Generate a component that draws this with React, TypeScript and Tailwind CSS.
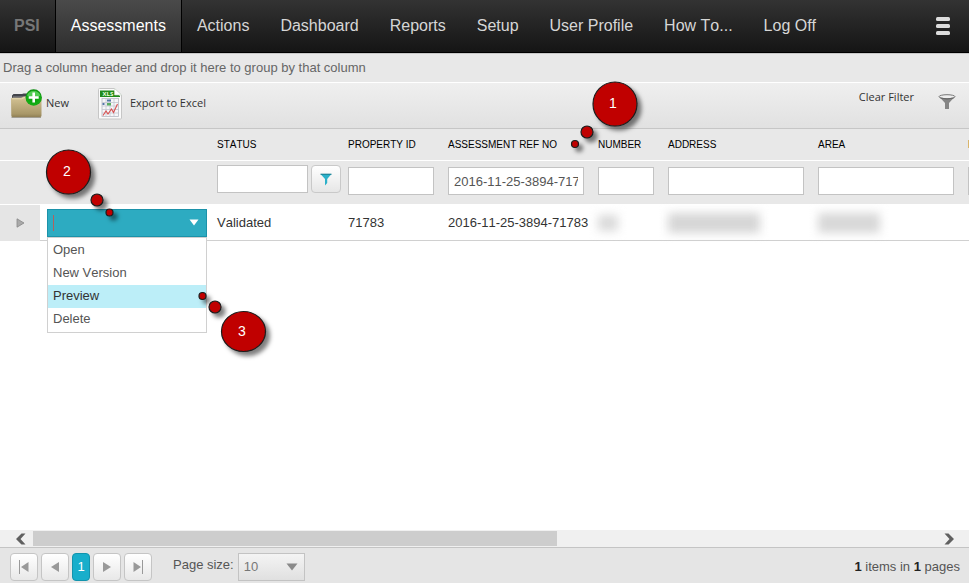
import React from "react";

const navItems = ["Actions", "Dashboard", "Reports", "Setup", "User Profile", "How To...", "Log Off"];

const actions = ["Open", "New Version", "Preview", "Delete"];

const inputClass =
  "block w-full h-7 border border-[#c3c3c3] bg-white px-[5px] text-[13px] text-[#555] outline-none";

const pagerButton =
  "flex h-7 w-7 items-center justify-center rounded-[4px] border border-[#c5c5c5] bg-linear-to-b from-white to-[#e8e8e8]";

function FolderIcon() {
  return (
    <svg width="32" height="30" viewBox="0 0 32 30" aria-hidden="true">
      <defs>
        <linearGradient id="folder" x1="0" y1="0" x2="0" y2="1">
          <stop offset="0" stopColor="#d6c596" />
          <stop offset="0.85" stopColor="#a89768" />
          <stop offset="1" stopColor="#8f7f55" />
        </linearGradient>
        <radialGradient id="plus" cx="0.5" cy="0.55" r="0.55">
          <stop offset="0" stopColor="#0a9a0a" />
          <stop offset="0.75" stopColor="#14ae14" />
          <stop offset="1" stopColor="#0c8a10" />
        </radialGradient>
      </defs>
      <path d="M1 10 V6.5 L2.5 5 H11 L12.5 4.5 H26 V10 Z" fill="#43454b" />
      <path d="M2 8 H26" stroke="#8e8e92" strokeWidth="1" />
      <path d="M0 10 Q0 8.8 1.5 8.8 H10 L13 7.5 H29 Q30.5 7.5 30.5 9 V26.5 Q30.5 28 29 28 H1.5 Q0.3 28 0.3 26.5 Z" fill="url(#folder)" />
      <path d="M1 9.8 H10.5 L13.5 8.5 H29" stroke="#eadfba" strokeWidth="0.8" fill="none" />
      <path d="M0.5 28.5 H30" stroke="#77705d" strokeOpacity="0.6" />
      <circle cx="22.7" cy="8.5" r="8.2" fill="url(#plus)" />
      <path d="M16 6.5 A7.2 7.2 0 0 1 29.4 6.5 Q23 9.5 16 6.5 Z" fill="#7de27d" fillOpacity="0.6" />
      <path d="M22.7 3.5 V13.5 M17.7 8.5 H27.7" stroke="#fff" strokeWidth="2.6" />
    </svg>
  );
}

function ExcelIcon() {
  return (
    <svg width="24" height="32" viewBox="0 0 24 32" aria-hidden="true">
      <path d="M1.5 0.5 H16.5 L23.5 7 V30 Q23.5 31 22.5 31 H1.5 Q0.5 31 0.5 30 V1.5 Q0.5 0.5 1.5 0.5 Z" fill="#fafafa" stroke="#c6c6c6" />
      <path d="M2 2.5 H16 L22 8 V9 H2 Z" fill="#1f8a1c" />
      <path d="M16.5 0.5 V7 H23.5 Z" fill="#fff" stroke="#c9d6c9" strokeWidth="0.6" />
      <text x="4.5" y="8" fontSize="6" fontWeight="bold" fill="#e8ffdc">
        XLS
      </text>
      <rect x="4" y="10.5" width="16.5" height="18" fill="#f6f6f8" stroke="#b5b9c2" strokeWidth="0.8" />
      <path d="M4 14.5 H20 M4 18 H20 M4 21.5 H20 M4 25 H20 M8 11 V28 M12 11 V28 M16 11 V28" stroke="#c4c8d0" strokeWidth="0.8" />
      <path d="M9 11.5 h4 v2 h-4 z M4.5 15 h2 v2 h-2 z" fill="#5577a8" />
      <path d="M9 15 h4 v2.5 h-4 z" fill="#58ad62" />
      <path d="M5 27.5 L8 23 L10 26 L13.5 21 L15.5 24.5 L19.5 16" stroke="#d85050" strokeWidth="1.1" fill="none" />
    </svg>
  );
}

function ToolbarFunnel() {
  return (
    <svg width="18" height="16" viewBox="0 0 18 16" aria-hidden="true">
      <path d="M1 2.5 L7 9 V15 H11 V9 L17 2.5 Z" fill="#858585" />
      <ellipse cx="9" cy="2.7" rx="8" ry="2" fill="#eee" stroke="#777" />
      <path d="M2.5 4 Q9 6 15.5 4" stroke="#666" fill="none" />
    </svg>
  );
}

function Callout({ label, x, y, ry, tx, ty, dots }: {
  label: string; x: number; y: number; ry: number; tx: number; ty: number;
  dots: [number, number, number][];
}) {
  return (
    <g>
      <g fill="#c00000" stroke="#1c1c1c" strokeWidth="1.2" filter="url(#callout-shadow)">
        <ellipse cx={x} cy={y} rx="22" ry={ry} />
        {dots.map(([cx, cy, r]) => (
          <circle key={cx} cx={cx} cy={cy} r={r} />
        ))}
      </g>
      <text x={tx} y={ty} textAnchor="middle" fontSize="14" fill="#fff">
        {label}
      </text>
    </g>
  );
}

function ActionMenu() {
  return (
    <div className="relative">
      <div className="flex h-7 items-center border border-[#1b92a9] bg-[#2dabc1]">
        <input
          aria-label="Action"
          role="combobox"
          aria-expanded="true"
          aria-controls="action-list"
          className="ml-[5px] h-4 min-w-0 flex-1 border-l border-[#b0625f] bg-transparent text-white outline-none"
        />
        <button aria-label="Toggle actions" className="flex h-full w-6 items-center justify-center">
          <svg width="10" height="7" viewBox="0 0 10 7">
            <path d="M0.5 0.5 H9.5 L5 6.5 Z" fill="#fff" />
          </svg>
        </button>
      </div>
      <ul id="action-list" role="listbox" className="absolute left-0 top-full z-10 w-full border border-[#d0d0d0] bg-white py-px">
        {actions.map((a) => (
          <li key={a} role="option" aria-selected={a === "Preview"}>
            <button
              className={`block h-[23px] w-full px-[5px] text-left ${
                a === "Preview" ? "bg-[#bceef8] text-[#333]" : "text-[#555]"
              }`}
            >
              {a}
            </button>
          </li>
        ))}
      </ul>
    </div>
  );
}

function App() {
  return (
    <div className="relative flex min-h-screen flex-col overflow-hidden bg-white font-['Liberation_Sans',Arial,sans-serif] text-[13px] text-[#333] [font-kerning:none]">
      {/* Main menu */}
      <nav className="flex h-[53px] items-stretch border-b border-black bg-linear-to-b from-[#333] to-[#151515] text-base text-[#d6d6d6]">
        <a href="#" className="flex items-center pl-[14px] pr-[15px] font-bold text-[#777]">PSI</a>
        <a href="#" className="flex items-center border-x border-black bg-linear-to-b from-[#4a4a4a] to-[#2e2e2e] px-[15px] text-white">
          Assessments
        </a>
        {navItems.map((item) => (
          <a key={item} href="#" className="flex items-center whitespace-nowrap border-r border-transparent px-[15px]">
            {item}
          </a>
        ))}
        <button aria-label="Menu" className="ml-auto mr-[19px] flex items-center">
          <svg width="14" height="18" viewBox="0 0 14 18" fill="#dcdcdc">
            <rect width="14" height="4" rx="1.5" />
            <rect y="7" width="14" height="4" rx="1.5" />
            <rect y="14" width="14" height="4" rx="1.5" />
          </svg>
        </button>
      </nav>

      <div className="flex h-[29px] items-center border-t border-[#c8c8c8] bg-[#e8e8e8] px-[3px] text-[#666]">
        Drag a column header and drop it here to group by that column
      </div>

      {/* Toolbar */}
      <div className="flex h-[47px] items-center border-b border-t border-b-[#c6c6c6] border-t-white bg-linear-to-b from-[#efefef] to-[#e1e1e1] pb-1 pl-[11px] pr-[13px] font-['Open_Sans',sans-serif] text-[11px] text-[#333]">
        <button className="flex items-center gap-[3px]">
          <FolderIcon />
          New
        </button>
        <button className="ml-[29px] flex items-center gap-2">
          <ExcelIcon />
          Export to Excel
        </button>
        <button className="mb-3 ml-auto">Clear Filter</button>
        <button aria-label="Filter" className="ml-6 mb-1">
          <ToolbarFunnel />
        </button>
      </div>

      {/* Grid */}
      <div className="flex-1 overflow-hidden">
        <table className="w-[1111px] table-fixed border-separate border-spacing-0">
          <colgroup>
            <col className="w-10" />
            <col className="w-[170px]" />
            <col className="w-[131px]" />
            <col className="w-[100px]" />
            <col className="w-[150px]" />
            <col className="w-[70px]" />
            <col className="w-[150px]" />
            <col className="w-[150px]" />
            <col className="w-[150px]" />
          </colgroup>
          <thead className="bg-[#e8e8e8]">
            <tr className="h-8 text-left text-[10px] text-black [&>*]:border-b [&>*]:border-white [&>*]:px-[7px] [&>*]:py-0 [&>*]:font-normal">
              <td></td>
              <td></td>
              <th>STATUS</th>
              <th>PROPERTY ID</th>
              <th>ASSESSMENT REF NO</th>
              <th>NUMBER</th>
              <th>ADDRESS</th>
              <th>AREA</th>
              <th>REGION</th>
            </tr>
            <tr className="h-[43px] [&>td]:px-[7px] [&>td]:pt-0 [&>td]:pb-[3px]">
              <td></td>
              <td></td>
              <td>
                <div className="mb-1 mr-[-7px] flex gap-[3px]">
                  <input aria-label="Filter status" className={inputClass} />
                  <button
                    aria-label="Status filter options"
                    className="flex h-7 w-[30px] shrink-0 items-center justify-center rounded-[4px] border border-[#c9c9c9] bg-linear-to-b from-white to-[#e6e6e6]"
                  >
                    <svg width="12" height="13" viewBox="0 0 12 13">
                      <path d="M0.5 1 H11.5 L7.2 6 V10 L5 12.5 V6 Z" fill="#2bb0c9" />
                      <path d="M0.5 1.2 H11.5" stroke="#16798c" />
                    </svg>
                  </button>
                </div>
              </td>
              <td><input aria-label="Filter property id" className={inputClass} /></td>
              <td>
                <input aria-label="Filter assessment ref no" defaultValue="2016-11-25-3894-71783" className={inputClass} />
              </td>
              <td><input aria-label="Filter number" className={inputClass} /></td>
              <td><input aria-label="Filter address" className={inputClass} /></td>
              <td><input aria-label="Filter area" className={inputClass} /></td>
              <td><input aria-label="Filter region" className={inputClass} /></td>
            </tr>
          </thead>
          <tbody>
            <tr className="h-[37px] whitespace-nowrap [&>td]:border-t [&>td]:border-t-white [&>td]:px-[7px] [&>td]:py-0 [&>td+td]:border-b [&>td+td]:border-b-[#d0d0d0]">
              <td className="bg-[#e5e5e5]">
                <button aria-label="Expand row" className="ml-[9px] flex">
                  <svg width="9" height="10" viewBox="0 0 9 10">
                    <path d="M1 0.8 L8 5 L1 9.2 Z" fill="#aaa" stroke="#888" strokeWidth="0.8" />
                  </svg>
                </button>
              </td>
              <td><div className="mr-[-4px]"><ActionMenu /></div></td>
              <td>Validated</td>
              <td>71783</td>
              <td>2016-11-25-3894-71783</td>
              <td><div className="h-4 w-5 bg-[#dadada] blur-[5px]"></div></td>
              <td><div className="h-5 w-[92px] bg-[#d6d6d6] blur-[5px]"></div></td>
              <td><div className="h-5 w-[62px] bg-[#d8d8d8] blur-[5px]"></div></td>
              <td></td>
            </tr>
          </tbody>
        </table>
      </div>

      {/* Horizontal scroll bar */}
      <div className="flex h-[17px] bg-[#f0f0f0]">
        <button aria-label="Scroll left" className="flex w-[33px] items-center justify-center pl-2">
          <svg width="10" height="12" viewBox="0 0 10 12">
            <path d="M0 6 L5.5 0.5 H9.5 L4.5 6 L9.5 11.5 H5.5 Z" fill="#606060" />
          </svg>
        </button>
        <div className="flex-1 py-px">
          <div className="h-full w-[58%] bg-[#cdcdcd]"></div>
        </div>
        <button aria-label="Scroll right" className="flex w-[33px] items-center justify-center pr-2">
          <svg width="10" height="12" viewBox="0 0 10 12">
            <path d="M10 6 L4.5 0.5 H0.5 L5.5 6 L0.5 11.5 H4.5 Z" fill="#606060" />
          </svg>
        </button>
      </div>

      {/* Pager */}
      <footer className="flex h-9 items-start border-t border-[#c4c4c4] bg-[#e5e5e5] pl-[10px] pr-[9px] pt-[5px] text-[#555]">
        <div className="flex gap-[3px]">
          <button aria-label="First page" className={pagerButton}>
            <svg width="10" height="14" viewBox="0 0 10 14" fill="#999">
              <path d="M0 0 H1 V14 H0 Z M9.5 2 V12 L2 7 Z" />
            </svg>
          </button>
          <button aria-label="Previous page" className={pagerButton}>
            <svg width="8" height="10" viewBox="0 0 8 10" fill="#999">
              <path d="M8 0 V10 L0 5 Z" />
            </svg>
          </button>
          <button className="h-7 w-[18px] rounded-[4px] border border-[#1294ad] bg-[#18aecb] text-white">1</button>
          <button aria-label="Next page" className={pagerButton}>
            <svg width="8" height="10" viewBox="0 0 8 10" fill="#999">
              <path d="M0 0 V10 L8 5 Z" />
            </svg>
          </button>
          <button aria-label="Last page" className={pagerButton}>
            <svg width="10" height="14" viewBox="0 0 10 14" fill="#999">
              <path d="M9 0 H10 V14 H9 Z M0.5 2 V12 L8 7 Z" />
            </svg>
          </button>
        </div>
        <label htmlFor="page-size" className="ml-[21px] mr-1 leading-6">Page size:</label>
        <div className="relative">
          <select
            id="page-size"
            className="h-7 w-[67px] appearance-none border border-[#c3c3c3] bg-linear-to-b from-[#f4f4f4] to-[#e0e0e0] px-[5px] text-[13px] text-[#777] outline-none"
          >
            <option>10</option>
            <option>20</option>
            <option>50</option>
          </select>
          <svg width="12" height="8" viewBox="0 0 12 8" className="pointer-events-none absolute right-[7px] top-[10px]">
            <path d="M0.5 0.5 H11.5 L6 7.5 Z" fill="#8a8a8a" />
          </svg>
        </div>
        <p className="ml-auto leading-7">
          <b className="text-[#222]">1</b> items in <b className="text-[#222]">1</b> pages
        </p>
      </footer>

      {/* Step markers */}
      <svg className="pointer-events-none absolute left-0 top-0 z-20" width="700" height="400" viewBox="0 0 700 400">
        <defs>
          <filter id="callout-shadow" x="-30%" y="-30%" width="170%" height="170%">
            <feDropShadow dx="4" dy="4" stdDeviation="2" floodColor="#000" floodOpacity="0.5" />
          </filter>
        </defs>
        <Callout label="1" x={615} y={104} ry={22} tx={613} ty={108} dots={[[587, 132, 6], [575, 144, 3.5]]} />
        <Callout label="2" x={68.5} y={172} ry={22} tx={67} ty={176} dots={[[97, 200, 6], [109.5, 212.5, 3.5]]} />
        <Callout label="3" x={243.5} y={331.5} ry={20} tx={242} ty={336} dots={[[215, 307, 6], [202.5, 296, 3.5]]} />
      </svg>
    </div>
  );
}

export default App;
